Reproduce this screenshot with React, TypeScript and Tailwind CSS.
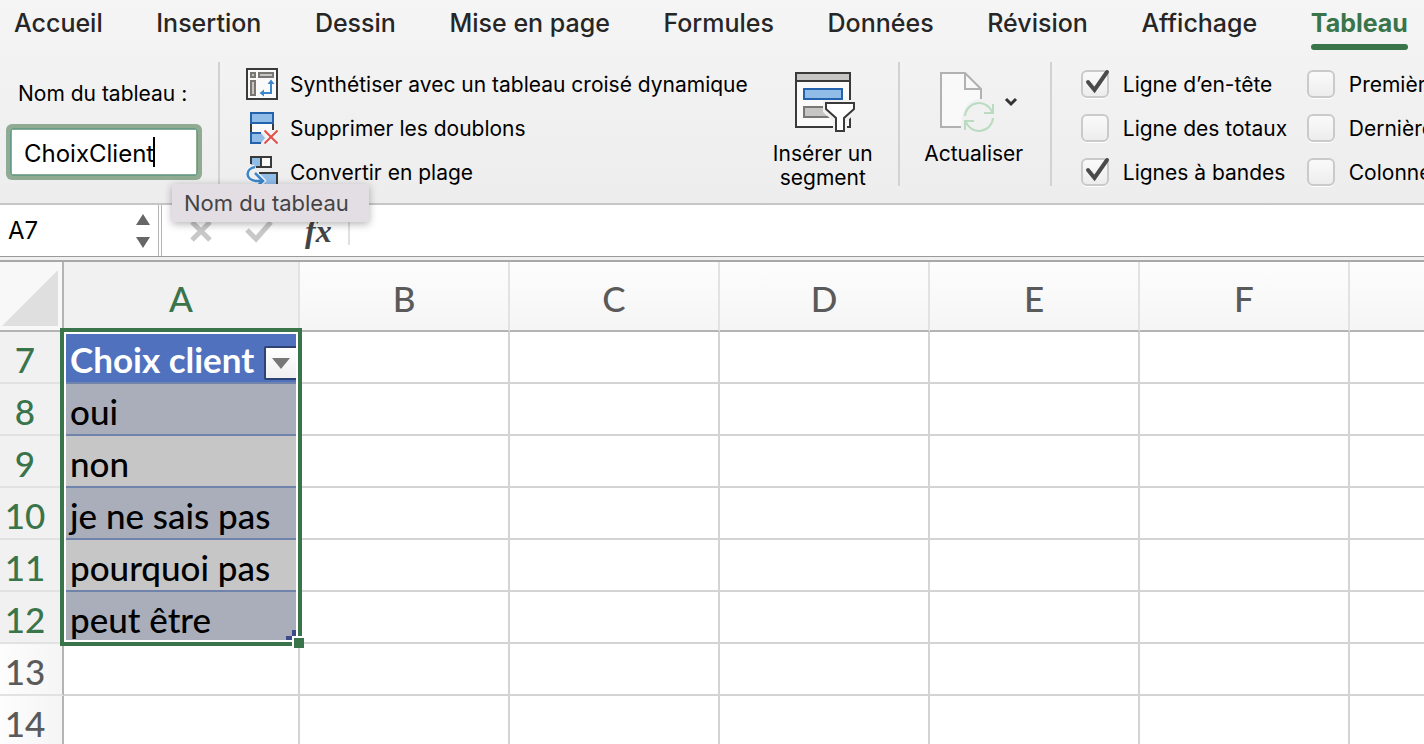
import type { ReactNode } from "react";

const tabs = [
  "Accueil",
  "Insertion",
  "Dessin",
  "Mise en page",
  "Formules",
  "Données",
  "Révision",
  "Affichage",
  "Tableau",
];

const columns = ["A", "B", "C", "D", "E", "F", ""];

const rows = [
  { id: 7, value: "Choix client" },
  { id: 8, value: "oui" },
  { id: 9, value: "non" },
  { id: 10, value: "je ne sais pas" },
  { id: 11, value: "pourquoi pas" },
  { id: 12, value: "peut être" },
  { id: 13, value: "" },
  { id: 14, value: "" },
];

function PivotIcon() {
  return (
    <svg width="32" height="32" viewBox="0 0 32 32" fill="none" aria-hidden="true">
      <rect x="1" y="1" width="30" height="30" fill="#fafafa" stroke="#3a3a3a" strokeWidth="2" />
      <g fill="#c8c6c4" stroke="#797774" strokeWidth="2">
        <rect x="5" y="5" width="4" height="4" />
        <rect x="13" y="5" width="14" height="4" />
        <rect x="5" y="13" width="4" height="14" />
      </g>
      <path d="M25 15v10H17" stroke="#3b86cc" strokeWidth="2" />
      <path
        d="M25 11.500 28.500 16h-7zM13.500 25l4.500-3.500v7z"
        fill="#3b86cc"
      />
    </svg>
  );
}

function DuplicatesIcon() {
  return (
    <svg width="32" height="32" viewBox="0 0 32 32" fill="none" aria-hidden="true">
      <path d="M5 11v10h22V11" fill="#fafafa" />
      <path d="M5 11v10M27 11v7" stroke="#3a3a3a" strokeWidth="2" />
      <path d="M20 18h10v13H20z" fill="#f3f3f3" />
      <rect x="5" y="1" width="22" height="10" fill="#90bce8" stroke="#2462ad" strokeWidth="2" />
      <path d="M15 31H5V21h10l4 5z" fill="#90bce8" />
      <path d="M15 31H5V21h10" stroke="#2462ad" strokeWidth="2" />
      <path d="m18.500 18.500 13 13M31.500 18.500l-13 13" stroke="#e2504a" strokeWidth="2" />
    </svg>
  );
}

function ConvertIcon() {
  return (
    <svg width="32" height="32" viewBox="0 0 32 32" fill="none" aria-hidden="true">
      <path d="M5 1h10v10H5z" fill="#90bce8" />
      <path d="M15 1h10v10H15z" fill="#fafafa" />
      <path d="M5 8V1h20v10H10M15 1v10" stroke="#3a3a3a" strokeWidth="2" />
      <path d="M13 17h18v14H14l6-7z" fill="#90bce8" />
      <path d="M13 17h18v14H14" stroke="#3a3a3a" strokeWidth="2" />
      <path d="M9 11c-10 2-10 13 1 14h7M9 17l8 8-8 7" stroke="#f3f3f3" strokeWidth="5" />
      <path d="M9 11c-10 2-10 13 1 14h7M9 17l8 8-8 7" stroke="#3b86cc" strokeWidth="2.500" />
    </svg>
  );
}

function SlicerIcon() {
  return (
    <svg width="60" height="60" viewBox="0 0 60 60" fill="none" aria-hidden="true">
      <rect x="1" y="1" width="54" height="54" fill="#fafafa" stroke="#3a3a3a" strokeWidth="2" />
      <rect x="1" y="1" width="54" height="8" fill="#c8c6c4" stroke="#3a3a3a" strokeWidth="2" />
      <rect x="9" y="17" width="38" height="10" fill="#90bce8" stroke="#2462ad" strokeWidth="2" />
      <rect x="9" y="35" width="38" height="10" fill="#c8c6c4" stroke="#797774" strokeWidth="2" />
      <path d="M28 28h34v12L52 49v11H38V49L28 40z" fill="#f2f2f2" />
      <path
        d="M31 31h28v6l-10 9v13h-8V46l-10-9z"
        fill="#fff"
        stroke="#3a3a3a"
        strokeWidth="2"
      />
    </svg>
  );
}

function RefreshIcon() {
  return (
    <svg width="54" height="60" viewBox="0 0 54 60" fill="none" aria-hidden="true">
      <path d="M21 55H1V1h24l16 16v10c-12 0-19 8-20 28z" fill="#f9f9f9" />
      <path d="M21 55H1V1h24l16 16v10M25 1v16h16" stroke="#b1b1b1" strokeWidth="2" />
      <g stroke="#b9dcc0" strokeWidth="2">
        <path d="M25 44a14 14 0 0 1 27-4M53 46a14 14 0 0 1-27 4" />
        <path d="M53 32v9h-9M25 58v-9h9" />
      </g>
    </svg>
  );
}

function Divider() {
  return <div className="mt-1.5 h-[124px] w-0.5 shrink-0 bg-[#d2d2d2]" />;
}

function Command({ icon, children }: { icon: ReactNode; children: ReactNode }) {
  return (
    <button className="flex h-11 items-center gap-3 text-left">
      {icon}
      <span className="pt-0.5">{children}</span>
    </button>
  );
}

function Option({ label, checked = false }: { label: string; checked?: boolean }) {
  return (
    <label className="flex h-11 items-center gap-3.5">
      <span className="relative size-7 shrink-0">
        <input
          type="checkbox"
          defaultChecked={checked}
          className="peer block size-7 appearance-none rounded-md border-2 border-[#cacaca] bg-linear-to-b from-[#fafafa] to-[#ededed] shadow-[0_1px_0_#fff]"
        />
        <svg
          className="pointer-events-none absolute inset-0 hidden peer-checked:block"
          width="28"
          height="28"
          viewBox="0 0 28 28"
          fill="none"
          overflow="visible"
          aria-hidden="true"
        >
          <path d="m7 12 6.500 8L26 2" stroke="#4a4a4a" strokeWidth="4" strokeLinecap="round" />
        </svg>
      </span>
      <span className="pt-0.5">{label}</span>
    </label>
  );
}

function Ribbon() {
  return (
    <header className="h-[205px] overflow-hidden border-b-2 border-[#c6c6c6] bg-linear-to-b from-[#f5f5f5] to-[#ededed] whitespace-nowrap">
      <nav className="flex justify-between pr-4 pl-3.5 text-[25px] leading-[30px] font-medium text-[#262626]">
        {tabs.map((tab) => (
          <button key={tab} className={tab === "Tableau" ? "pt-2 font-bold text-[#3a744a]" : "pt-2"}>
            {tab}
            <span
              className={
                tab === "Tableau"
                  ? "mt-1.5 block h-1.5 rounded-full bg-[#3a744a]"
                  : "mt-1.5 block h-1.5"
              }
            />
          </button>
        ))}
      </nav>

      <div className="flex pt-1.5 text-[21px] leading-6">
        <div className="w-[218px] shrink-0 pt-6">
          <label htmlFor="table-name" className="block pt-0.5 pl-[18px]">
            Nom du tableau :
          </label>
          <div className="mt-[18px] ml-1.5 w-[196px] rounded-md bg-[#8fac92] p-1">
            <div className="relative rounded-sm border border-[#639c8c] bg-[#8fac92] p-px">
              <input
                id="table-name"
                defaultValue="ChoixClient"
                className="block h-11 w-full bg-white pt-0.5 pl-3 text-2xl outline-none"
              />
              <span className="absolute top-2 left-[142px] h-[30px] w-0.5 bg-black" />
            </div>
          </div>
        </div>
        <Divider />
        <div className="ml-[26px] shrink-0 pt-1.5">
          <Command icon={<PivotIcon />}>Synthétiser avec un tableau croisé dynamique</Command>
          <Command icon={<DuplicatesIcon />}>Supprimer les doublons</Command>
          <Command icon={<ConvertIcon />}>Convertir en plage</Command>
        </div>
        <button className="ml-6 flex w-[102px] shrink-0 flex-col items-center gap-2 pt-4">
          <span className="pl-1">
            <SlicerIcon />
          </span>
          <span className="pt-0.5">
            Insérer un
            <br />
            segment
          </span>
        </button>
        <div className="ml-6">
          <Divider />
        </div>
        <button className="ml-6 flex w-[100px] shrink-0 flex-col items-center gap-2 self-start pt-4">
          <span className="flex items-center gap-2.5 pl-2.5">
            <RefreshIcon />
            <svg width="14" height="10" viewBox="0 0 14 10" fill="none" aria-hidden="true">
              <path d="m2 2 5 5 5-5" stroke="#333" strokeWidth="3" />
            </svg>
          </span>
          <span className="pt-0.5">Actualiser</span>
        </button>
        <div className="ml-[26px]">
          <Divider />
        </div>
        <div className="ml-[29px] w-[226px] shrink-0 pt-1.5">
          <Option label="Ligne d’en-tête" checked />
          <Option label="Ligne des totaux" />
          <Option label="Lignes à bandes" checked />
        </div>
        <div className="shrink-0 pt-1.5">
          <Option label="Première colonne" />
          <Option label="Dernière colonne" />
          <Option label="Colonnes à bandes" />
        </div>
      </div>
    </header>
  );
}

function FormulaBar() {
  return (
    <div>
      <div className="flex h-[51px] items-start bg-white">
        <div className="flex h-[51px] w-[162px] shrink-0 items-center border-r-4 border-double border-[#b4b4b4] pl-2">
          <input
            aria-label="Zone Nom"
            defaultValue="A7"
            className="min-w-0 flex-1 text-2xl outline-none"
          />
          <button aria-label="Choisir une plage" className="pr-2">
            <svg width="14" height="34" viewBox="0 0 14 34" fill="#666" aria-hidden="true">
              <path d="M7 0l7 11H0zM0 23h14L7 34z" />
            </svg>
          </button>
        </div>
        <button aria-label="Annuler" className="mt-3.5 ml-[27px]">
          <svg width="24" height="24" viewBox="0 0 24 24" fill="none" aria-hidden="true">
            <path d="m3 3 18 18M21 3 3 21" stroke="#c8c8c8" strokeWidth="5" />
          </svg>
        </button>
        <button aria-label="Entrer" className="mt-3.5 ml-8">
          <svg width="28" height="24" viewBox="0 0 28 24" fill="none" aria-hidden="true">
            <path d="m2 11 9 9L26 3" stroke="#c8c8c8" strokeWidth="5" />
          </svg>
        </button>
        <button
          aria-label="Insérer une fonction"
          className="mt-2 ml-8 font-['Liberation_Serif',serif] text-[32px] leading-9 font-bold text-[#444] italic"
        >
          fx
        </button>
        <div className="ml-4 h-10 w-0.5 bg-[#e0e0e0]" />
        <input
          aria-label="Barre de formule"
          className="h-full min-w-0 flex-1 px-3 text-2xl outline-none"
        />
      </div>
      <div className="h-1.5 border-t border-b-2 border-t-[#9a9a9a] border-b-[#a8a8a8] bg-[#f0f0f0]" />
    </div>
  );
}

function Selection() {
  return (
    <div className="pointer-events-none absolute -top-1 -left-1 z-10 h-[318px] w-[242px] border-4 border-[#3a744a]">
      <div className="h-full border-2 border-white" />
      <div className="absolute right-1.5 bottom-0.5 h-1 w-1.5 bg-[#3c4a8c]" />
      <div className="absolute right-0.5 bottom-1.5 h-1.5 w-1 bg-[#3c4a8c]" />
      <div className="absolute -right-1.5 -bottom-1.5 size-3 border-t-2 border-l-2 border-white bg-[#3a744a]" />
    </div>
  );
}

function cellStyle(row: number, column: number) {
  if (column > 0 || row > 12) return "border-[#d4d4d4] bg-white";
  if (row === 7) return "border-r-[#d4d4d4] border-b-[#7083ab] bg-[#4f71be] font-bold text-white";
  return row % 2 === 0
    ? "border-r-[#d4d4d4] border-b-[#7083ab] bg-[#a9aeba]"
    : "border-r-[#d4d4d4] border-b-[#7083ab] bg-[#c6c6c6]";
}

function Sheet() {
  return (
    <table className="w-full table-fixed border-separate border-spacing-0 font-['Lato',sans-serif] text-[35px] leading-[46px] font-medium">
      <colgroup>
        <col className="w-16" />
        <col className="w-[236px]" />
        <col className="w-[210px]" />
        <col className="w-[210px]" />
        <col className="w-[210px]" />
        <col className="w-[210px]" />
        <col className="w-[210px]" />
        <col />
      </colgroup>
      <thead>
        <tr className="h-[70px]">
          <th className="border-r-2 border-b-2 border-[#b4b4b4] bg-[#f8f8f8] p-0 align-bottom">
            <svg className="mb-1 ml-0.5" width="56" height="56" viewBox="0 0 56 56" aria-hidden="true">
              <path d="M56 0v56H0z" fill="#dfdfdf" />
            </svg>
          </th>
          {columns.map((name, i) => (
            <th
              key={i}
              className={
                name === "A"
                  ? "border-r-2 border-b-2 border-r-[#e2e2e2] border-b-[#b4b4b4] bg-[#f1f1f1] px-0 pt-1 pb-0 font-medium text-[#3a744a]"
                  : "border-r-2 border-b-2 border-r-[#e2e2e2] border-b-[#b4b4b4] bg-linear-to-b from-[#fdfdfd] to-[#f5f5f5] px-0 pt-1 pb-0 font-medium text-[#5a5a5a] last:border-r-0"
              }
            >
              {name}
            </th>
          ))}
        </tr>
      </thead>
      <tbody>
        {rows.map((row) => (
          <tr key={row.id} className="h-[52px]">
            <th
              className={
                row.id <= 12
                  ? "border-r-2 border-b-2 border-r-[#b4b4b4] border-b-[#e2e2e2] bg-[#f1f1f1] pt-1 pr-3 pb-0 pl-0 font-medium text-[#3a744a]"
                  : "border-r-2 border-b-2 border-r-[#b4b4b4] border-b-[#e2e2e2] bg-linear-to-r from-[#fdfdfd] to-[#f5f5f5] pt-1 pr-3 pb-0 pl-0 font-medium text-[#5a5a5a]"
              }
            >
              {row.id}
            </th>
            {columns.map((_, i) => (
              <td
                key={i}
                className={`relative border-r-2 border-b-2 pt-1 pr-0 pb-0 pl-1.5 whitespace-nowrap last:border-r-0 ${cellStyle(row.id, i)}`}
              >
                {i === 0 && row.value}
                {i === 0 && row.id === 7 && (
                  <>
                    <button
                      aria-label="Filtrer"
                      className="absolute right-0 bottom-0.5 flex h-[34px] w-[34px] items-center justify-center rounded-xs border-2 border-[#2c4374] bg-linear-to-b from-white to-[#f0f0f0]"
                    >
                      <svg width="18" height="11" viewBox="0 0 18 11" fill="#777" aria-hidden="true">
                        <path d="M0 0h18L9 11z" />
                      </svg>
                    </button>
                    <Selection />
                  </>
                )}
              </td>
            ))}
          </tr>
        ))}
      </tbody>
    </table>
  );
}

export default function App() {
  return (
    <div className="relative h-screen overflow-hidden bg-white font-['Inter',sans-serif] text-black">
      <Ribbon />
      <FormulaBar />
      <Sheet />
      <div
        role="tooltip"
        className="absolute top-[184px] left-[172px] z-20 bg-[#e3dee3] py-1.5 pr-5 pl-3 text-[22px] leading-[26px] text-[#444] shadow-[0_2px_8px_rgba(0,0,0,0.3)]"
      >
        Nom du tableau
      </div>
    </div>
  );
}
